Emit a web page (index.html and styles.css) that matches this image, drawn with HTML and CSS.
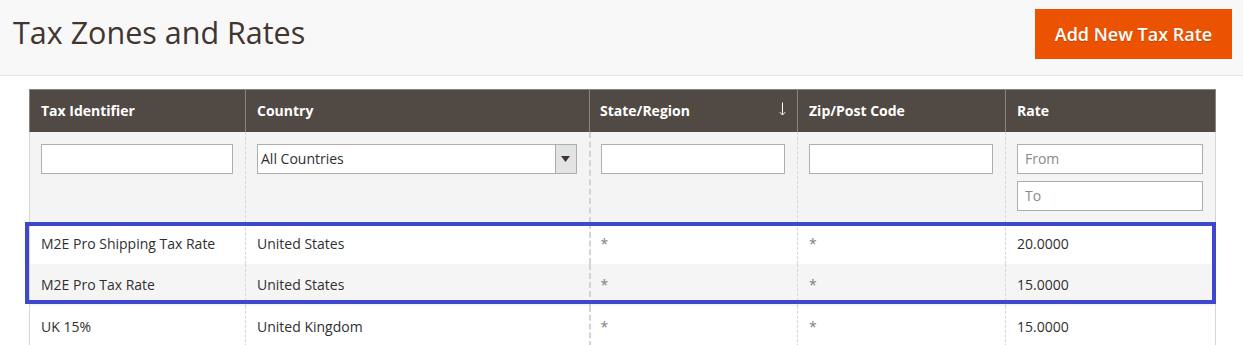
FILE: index.html
```html
<!DOCTYPE html>
<html lang="en">
<head>
<meta charset="utf-8">
<title>Tax Zones and Rates</title>
<link rel="stylesheet" href="styles.css">
</head>
<body>
<header class="page-header">
  <h1 class="page-title">Tax Zones and Rates</h1>
  <button class="btn-primary" type="button">Add New Tax Rate</button>
</header>
<main class="grid-wrap">
  <table class="grid">
    <colgroup>
      <col class="c1"><col class="c2"><col class="c3"><col class="c4"><col class="c5">
    </colgroup>
    <thead>
      <tr class="head-row">
        <th>Tax Identifier</th>
        <th>Country</th>
        <th class="sorted"><span class="th-inner"><span>State/Region</span>
          <svg class="sort-arrow" width="7" height="14" viewBox="0 0 7 14"><path d="M3.5 0.5V13M0.8 10.2L3.5 13L6.2 10.2" fill="none" stroke="#fff" stroke-width="1"/></svg></span></th>
        <th>Zip/Post Code</th>
        <th>Rate</th>
      </tr>
      <tr class="filter-row">
        <td><input class="field" type="text"></td>
        <td>
          <div class="select">
            <span class="select-text">All Countries</span>
            <span class="select-btn"><svg width="9" height="6" viewBox="0 0 9 6"><path d="M0 0H9L4.5 6Z" fill="#41362f"/></svg></span>
          </div>
        </td>
        <td class="sep"><input class="field" type="text"></td>
        <td><input class="field" type="text"></td>
        <td>
          <input class="field" type="text" placeholder="From">
          <input class="field field-to" type="text" placeholder="To">
        </td>
      </tr>
    </thead>
    <tbody>
      <tr>
        <td>M2E Pro Shipping Tax Rate</td>
        <td>United States</td>
        <td class="sep star">*</td>
        <td class="star">*</td>
        <td>20.0000</td>
      </tr>
      <tr class="alt">
        <td>M2E Pro Tax Rate</td>
        <td>United States</td>
        <td class="sep star">*</td>
        <td class="star">*</td>
        <td>15.0000</td>
      </tr>
      <tr>
        <td>UK 15%</td>
        <td>United Kingdom</td>
        <td class="sep star">*</td>
        <td class="star">*</td>
        <td>15.0000</td>
      </tr>
    </tbody>
  </table>
  <div class="highlight"></div>
</main>
</body>
</html>
```
FILE: styles.css
```css
html, body {
  margin: 0;
  padding: 0;
  background: #fff;
  font-family: "Open Sans", "Noto Sans", sans-serif;
  color: #303030;
}

.page-header {
  box-sizing: border-box;
  height: 76px;
  padding: 14px 11px 0 13px;
  background: #f8f8f8;
  border-bottom: 1px solid #e3e3e3;
  display: flex;
  justify-content: space-between;
  align-items: flex-start;
}

.page-title {
  margin: 0;
  font-size: 30.5px;
  line-height: 36px;
  font-weight: 400;
  color: #41362f;
}

.btn-primary {
  margin-top: -5px;
  width: 197px;
  height: 50px;
  border: 0;
  background: #eb5202;
  color: #fff;
  font-family: "Open Sans", sans-serif;
  font-size: 18px;
  font-weight: 600;
  padding: 0;
  text-shadow: 0 1px 0 rgba(0,0,0,0.2);
}

.grid-wrap {
  position: relative;
  padding: 13px 28px 0 29px;
}

.grid {
  width: 1187px;
  table-layout: fixed;
  border-collapse: collapse;
  border-left: 1px solid #d6d6d6;
  border-right: 1px solid #d6d6d6;
  font-size: 14px;
}

.c1 { width: 216px; }
.c2 { width: 344px; }
.c3 { width: 208px; }
.c4 { width: 208px; }
.c5 { width: 210px; }

.head-row th {
  height: 42px;
  box-sizing: border-box;
  padding: 0 12px 0 11px;
  background: #514943;
  color: #fff;
  font-weight: 700;
  font-size: 14px;
  text-align: left;
  border-top: 1px solid #8a837f;
  border-left: 1px solid #8a837f;
  border-right: 1px solid #8a837f;
}

.head-row th.sorted {
  padding-left: 10px;
}

.th-inner {
  display: flex;
  justify-content: space-between;
  align-items: center;
}

.sort-arrow {
  margin-right: -1px;
  margin-top: -4px;
}

.grid td {
  padding: 10px 12px 10px 11px;
  line-height: 21.5px;
  vertical-align: middle;
  border-left: 1px dashed #d6d6d6;
  border-right: 1px dashed #d6d6d6;
}

.grid td.sep {
  border-left: 2px dashed #d3d3d3;
  padding-left: 10px;
}

.filter-row td {
  background: #f4f4f4;
  vertical-align: top;
  padding: 12px 12px 12px 11px;
  line-height: 0;
}

.field {
  display: block;
  box-sizing: border-box;
  width: 100%;
  height: 30px;
  margin: 0;
  padding: 0 7px;
  border: 1px solid #adadad;
  background: #fff;
  font-family: "Open Sans", sans-serif;
  font-size: 14px;
  color: #303030;
}

.field::placeholder {
  color: #8a8a8a;
}

.field-to {
  margin-top: 7px;
}

.select {
  box-sizing: border-box;
  height: 30px;
  border: 1px solid #adadad;
  background: #fff;
  display: flex;
  align-items: stretch;
}

.select-text {
  flex: 1;
  padding-left: 3px;
  line-height: 28px;
  font-size: 14px;
  color: #303030;
}

.select-btn {
  width: 20px;
  background: #e3e3e3;
  border-left: 1px solid #adadad;
  display: flex;
  align-items: center;
  justify-content: center;
}

.grid tbody tr.alt td {
  background: #f5f5f5;
}

.grid td.star {
  color: #808080;
}

.highlight {
  position: absolute;
  left: 25px;
  top: 146px;
  width: 1191px;
  height: 82px;
  box-sizing: border-box;
  border: 4px solid #3f48cc;
  pointer-events: none;
}
```
